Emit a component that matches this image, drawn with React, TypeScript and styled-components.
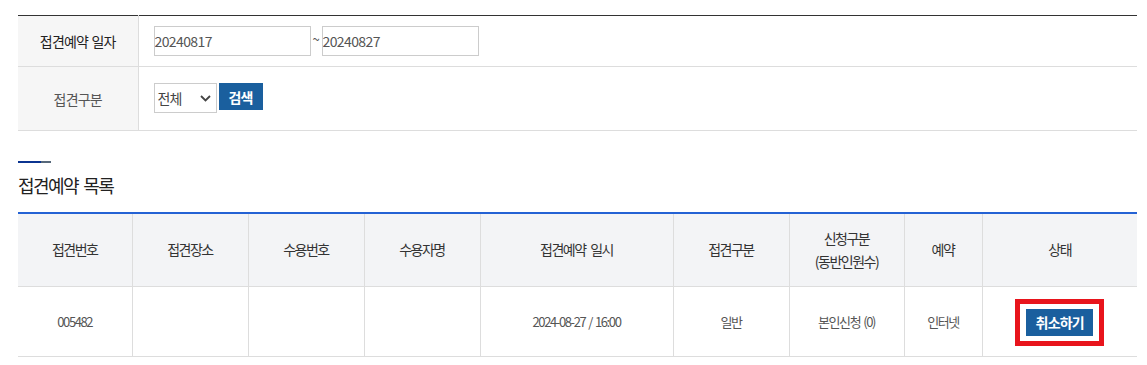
import styled, { createGlobalStyle } from "styled-components";

const GlobalStyle = createGlobalStyle`
  * { box-sizing: border-box; }
  body {
    margin: 0;
    background: #fff;
    font-family: "Noto Sans CJK KR", "Noto Sans", sans-serif;
    color: #333;
  }
`;

const Page = styled.div`
  width: 1119px;
  margin: 15px 0 0 18px;
`;

const SearchTable = styled.table`
  width: 100%;
  border-collapse: collapse;
  border-top: 1px solid #333;
`;

const SearchRow = styled.tr<{ $h: number }>`
  height: ${(p) => p.$h}px;
  border-bottom: 1px solid #ddd;
`;

const LabelCell = styled.th<{ $strong?: boolean }>`
  width: 120px;
  padding: 0;
  background: #f6f6f6;
  border-right: 1px solid #ddd;
  font-size: 14px;
  font-weight: 400;
  letter-spacing: -0.8px;
  word-spacing: 1px;
  color: ${(p) => (p.$strong ? "#222" : "#555")};
  text-align: center;
`;

const FieldCell = styled.td`
  padding: 0 0 0 15px;
`;

const FieldLine = styled.div`
  display: flex;
  align-items: center;
`;

const DateInput = styled.input`
  width: 157px;
  height: 30px;
  padding: 0;
  border: 1px solid #ccc;
  background: #fff;
  font-family: inherit;
  font-size: 14px;
  letter-spacing: -0.6px;
  color: #555;
  outline: none;
`;

const Tilde = styled.span`
  width: 11px;
  font-size: 13px;
  color: #555;
  text-align: center;
  margin-top: -5px;
`;

const SelectBox = styled.div`
  position: relative;
  width: 63px;
  height: 30px;
  margin-top: -2px;
  border: 1px solid #ccc;
  background: #fff;
  display: flex;
  align-items: center;
  padding-left: 3px;
  font-size: 14px;
  letter-spacing: -1px;
  color: #444;
  svg {
    position: absolute;
    right: 5px;
    top: 11px;
  }
`;

const BlueButton = styled.button<{ $w: number }>`
  width: ${(p) => p.$w}px;
  height: 27px;
  border: 0;
  padding: 0;
  background: #1a5f9e;
  color: #fff;
  font-family: inherit;
  font-weight: 700;
  font-size: 14px;
  letter-spacing: -0.8px;
  cursor: pointer;
`;

const SearchButton = styled(BlueButton)`
  margin-left: 2px;
  margin-top: -4px;
`;

const Section = styled.section`
  margin-top: 30px;
`;

const Heading = styled.h3`
  margin: 0;
  padding-top: 11px;
  position: relative;
  font-size: 18px;
  font-weight: 400;
  line-height: 26px;
  letter-spacing: -1.6px;
  word-spacing: 3px;
  color: #222;
  &::before {
    content: "";
    position: absolute;
    left: 0;
    top: 0;
    width: 33px;
    height: 2px;
    background: linear-gradient(to right, #0b3490 0 23px, #56687a 23px);
  }
`;

const ListTable = styled.table`
  width: 100%;
  margin-top: 14px;
  border-collapse: collapse;
  border-top: 2px solid #2462d4;
  table-layout: fixed;
`;

const HeadCell = styled.th`
  height: 73px;
  padding: 0;
  background: #f3f4f6;
  border-right: 1px solid #ddd;
  border-bottom: 1px solid #ddd;
  font-size: 14px;
  font-weight: 400;
  line-height: 23px;
  letter-spacing: -1.5px;
  word-spacing: 3px;
  color: #333;
  text-align: center;
  &:last-child { border-right: 0; }
`;

const BodyCell = styled.td`
  height: 70px;
  padding: 0;
  border-right: 1px solid #ddd;
  border-bottom: 1px solid #ddd;
  font-size: 13px;
  letter-spacing: -1.4px;
  word-spacing: 1.5px;
  color: #555;
  text-align: center;
  &:last-child { border-right: 0; }
`;

const Highlight = styled.span`
  display: inline-block;
  margin-top: 2px;
  padding: 5px 6px;
  border: 5px solid #e8141c;
  line-height: 0;
  word-spacing: 0;
`;

const columns = [114, 116, 116, 116, 193, 116, 115, 78, 155];

const Chevron = () => (
  <svg width="11" height="7" viewBox="0 0 11 7">
    <path d="M1 1l4.5 4.5L10 1" fill="none" stroke="#444" strokeWidth="1.8" />
  </svg>
);

export default function App() {
  return (
    <>
      <GlobalStyle />
      <Page>
        <SearchTable>
          <tbody>
            <SearchRow $h={51}>
              <LabelCell $strong>접견예약 일자</LabelCell>
              <FieldCell>
                <FieldLine>
                  <DateInput defaultValue="20240817" />
                  <Tilde>~</Tilde>
                  <DateInput defaultValue="20240827" />
                </FieldLine>
              </FieldCell>
            </SearchRow>
            <SearchRow $h={64}>
              <LabelCell>접견구분</LabelCell>
              <FieldCell>
                <FieldLine>
                  <SelectBox>
                    전체
                    <Chevron />
                  </SelectBox>
                  <SearchButton $w={44}>검색</SearchButton>
                </FieldLine>
              </FieldCell>
            </SearchRow>
          </tbody>
        </SearchTable>

        <Section>
          <Heading>접견예약 목록</Heading>
          <ListTable>
            <colgroup>
              {columns.map((w, i) => (
                <col key={i} style={{ width: w }} />
              ))}
            </colgroup>
            <thead>
              <tr>
                <HeadCell>접견번호</HeadCell>
                <HeadCell>접견장소</HeadCell>
                <HeadCell>수용번호</HeadCell>
                <HeadCell>수용자명</HeadCell>
                <HeadCell>접견예약 일시</HeadCell>
                <HeadCell>접견구분</HeadCell>
                <HeadCell>
                  신청구분
                  <br />
                  (동반인원수)
                </HeadCell>
                <HeadCell>예약</HeadCell>
                <HeadCell>상태</HeadCell>
              </tr>
            </thead>
            <tbody>
              <tr>
                <BodyCell>005482</BodyCell>
                <BodyCell />
                <BodyCell />
                <BodyCell />
                <BodyCell>2024-08-27 / 16:00</BodyCell>
                <BodyCell>일반</BodyCell>
                <BodyCell>본인신청 (0)</BodyCell>
                <BodyCell>인터넷</BodyCell>
                <BodyCell>
                  <Highlight>
                    <BlueButton $w={67}>취소하기</BlueButton>
                  </Highlight>
                </BodyCell>
              </tr>
            </tbody>
          </ListTable>
        </Section>
      </Page>
    </>
  );
}
